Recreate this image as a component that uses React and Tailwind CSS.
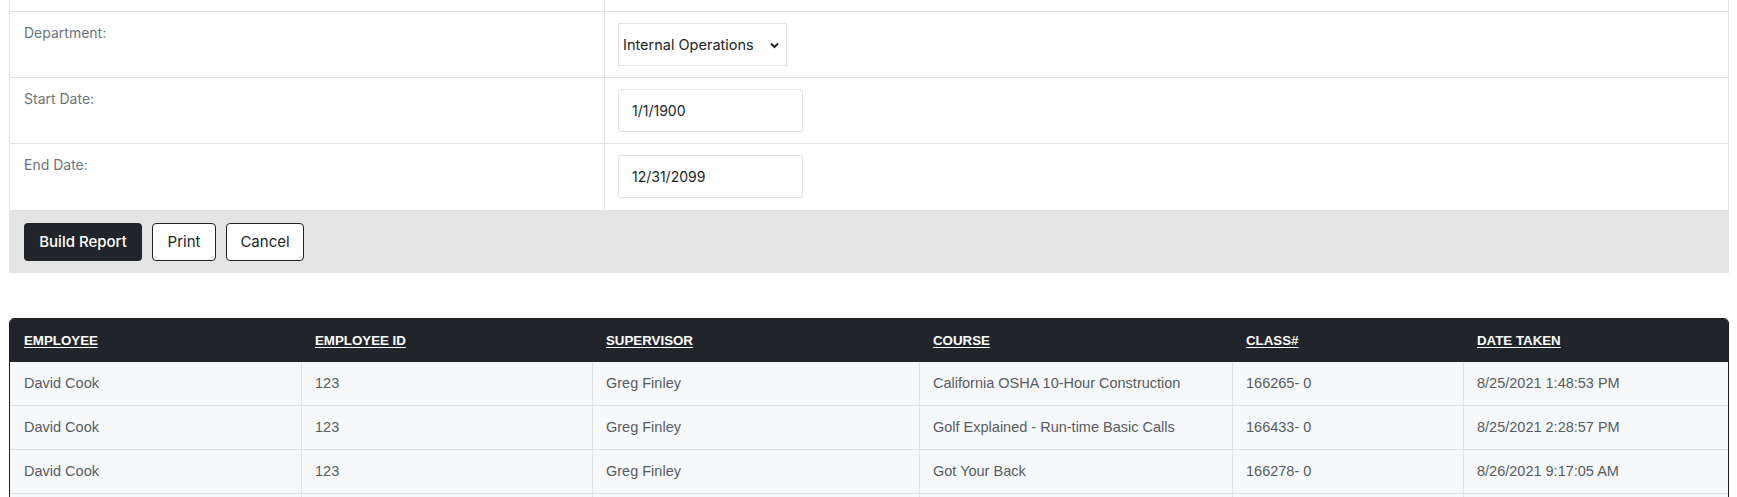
import React from "react";

const rows = [
  ["David Cook", "123", "Greg Finley", "California OSHA 10-Hour Construction", "166265- 0", "8/25/2021 1:48:53 PM"],
  ["David Cook", "123", "Greg Finley", "Golf Explained - Run-time Basic Calls", "166433- 0", "8/25/2021 2:28:57 PM"],
  ["David Cook", "123", "Greg Finley", "Got Your Back", "166278- 0", "8/26/2021 9:17:05 AM"],
  ["", "", "", "", "", ""],
];

const headers = ["EMPLOYEE", "EMPLOYEE ID", "SUPERVISOR", "COURSE", "CLASS#", "DATE TAKEN"];

const gridCols = "grid grid-cols-[291px_291px_327px_313px_231px_1fr]";

function FormRow({ label, children, last }) {
  return (
    <div className={`grid grid-cols-[595px_1fr] h-[66px] ${last ? "" : "border-b border-[#e2e2e2]"}`}>
      <div className="border-r border-[#e2e2e2] pl-[14px] pt-[11px] text-[14px] leading-[20px] text-[#6c757d]">
        {label}
      </div>
      <div className="pl-[13px] pt-[11px]">{children}</div>
    </div>
  );
}

export default function App() {
  return (
    <div className="bg-white h-[497px] overflow-hidden ml-[9px] mr-[8px] font-['Inter',sans-serif]">
      {/* Form table */}
      <div className="border-x border-[#e2e2e2]">
        <div className="grid grid-cols-[595px_1fr] h-[12px] border-b border-[#e2e2e2]">
          <div className="border-r border-[#e2e2e2]" />
          <div />
        </div>
        <FormRow label="Department:">
          <div className="w-[169px] h-[43px] border border-[#e2e2e2] flex items-center pl-[4px] pr-[7px] justify-between text-[14.5px] text-[#212529]">
            <span>Internal Operations</span>
            <svg width="9" height="7" viewBox="0 0 9 7" className="mt-[1px]">
              <path d="M1 1.5 L4.5 5 L8 1.5" fill="none" stroke="#212529" strokeWidth="2" />
            </svg>
          </div>
        </FormRow>
        <FormRow label="Start Date:">
          <div className="w-[185px] h-[43px] border border-[#e2e2e2] rounded-[3px] flex items-center pl-[13px] text-[14px] text-[#212529]">
            1/1/1900
          </div>
        </FormRow>
        <FormRow label="End Date:" last>
          <div className="w-[185px] h-[43px] border border-[#e2e2e2] rounded-[3px] flex items-center pl-[13px] text-[14px] text-[#212529]">
            12/31/2099
          </div>
        </FormRow>
      </div>

      {/* Button bar */}
      <div className="bg-[#e4e4e4] h-[63px] pl-[15px] pt-[13px] flex gap-[10px] mr-[-1px]">
        <button className="h-[38px] w-[118px] rounded-[4px] bg-[#212529] text-white text-[15px] font-medium">
          Build Report
        </button>
        <button className="h-[38px] w-[64px] rounded-[4px] bg-white border border-[#212529] text-[#212529] text-[15px]">
          Print
        </button>
        <button className="h-[38px] w-[78px] rounded-[4px] bg-white border border-[#212529] text-[#212529] text-[15px]">
          Cancel
        </button>
      </div>

      {/* Results table */}
      <div className="mt-[45px] border border-[#1b1e21] rounded-t-[5px] overflow-hidden font-['Liberation_Sans',Arial,sans-serif]">
        <div className={`${gridCols} bg-[#212529] h-[43px] items-center`}>
          {headers.map((h) => (
            <div key={h} className="px-[14px] text-[13.3px] font-bold text-white underline underline-offset-[2px]">
              {h}
            </div>
          ))}
        </div>
        {rows.map((r, i) => (
          <div key={i} className={`${gridCols} bg-[#f7f8f9] h-[44px] border-b border-[#dee2e6]`}>
            {r.map((c, j) => (
              <div
                key={j}
                className={`flex items-center px-[14px] text-[14.5px] text-[#575c62] ${j > 0 ? "border-l border-[#dee2e6]" : ""} ${j === 0 ? "pl-[14px]" : "pl-[13px]"}`}
              >
                {c}
              </div>
            ))}
          </div>
        ))}
      </div>
    </div>
  );
}
